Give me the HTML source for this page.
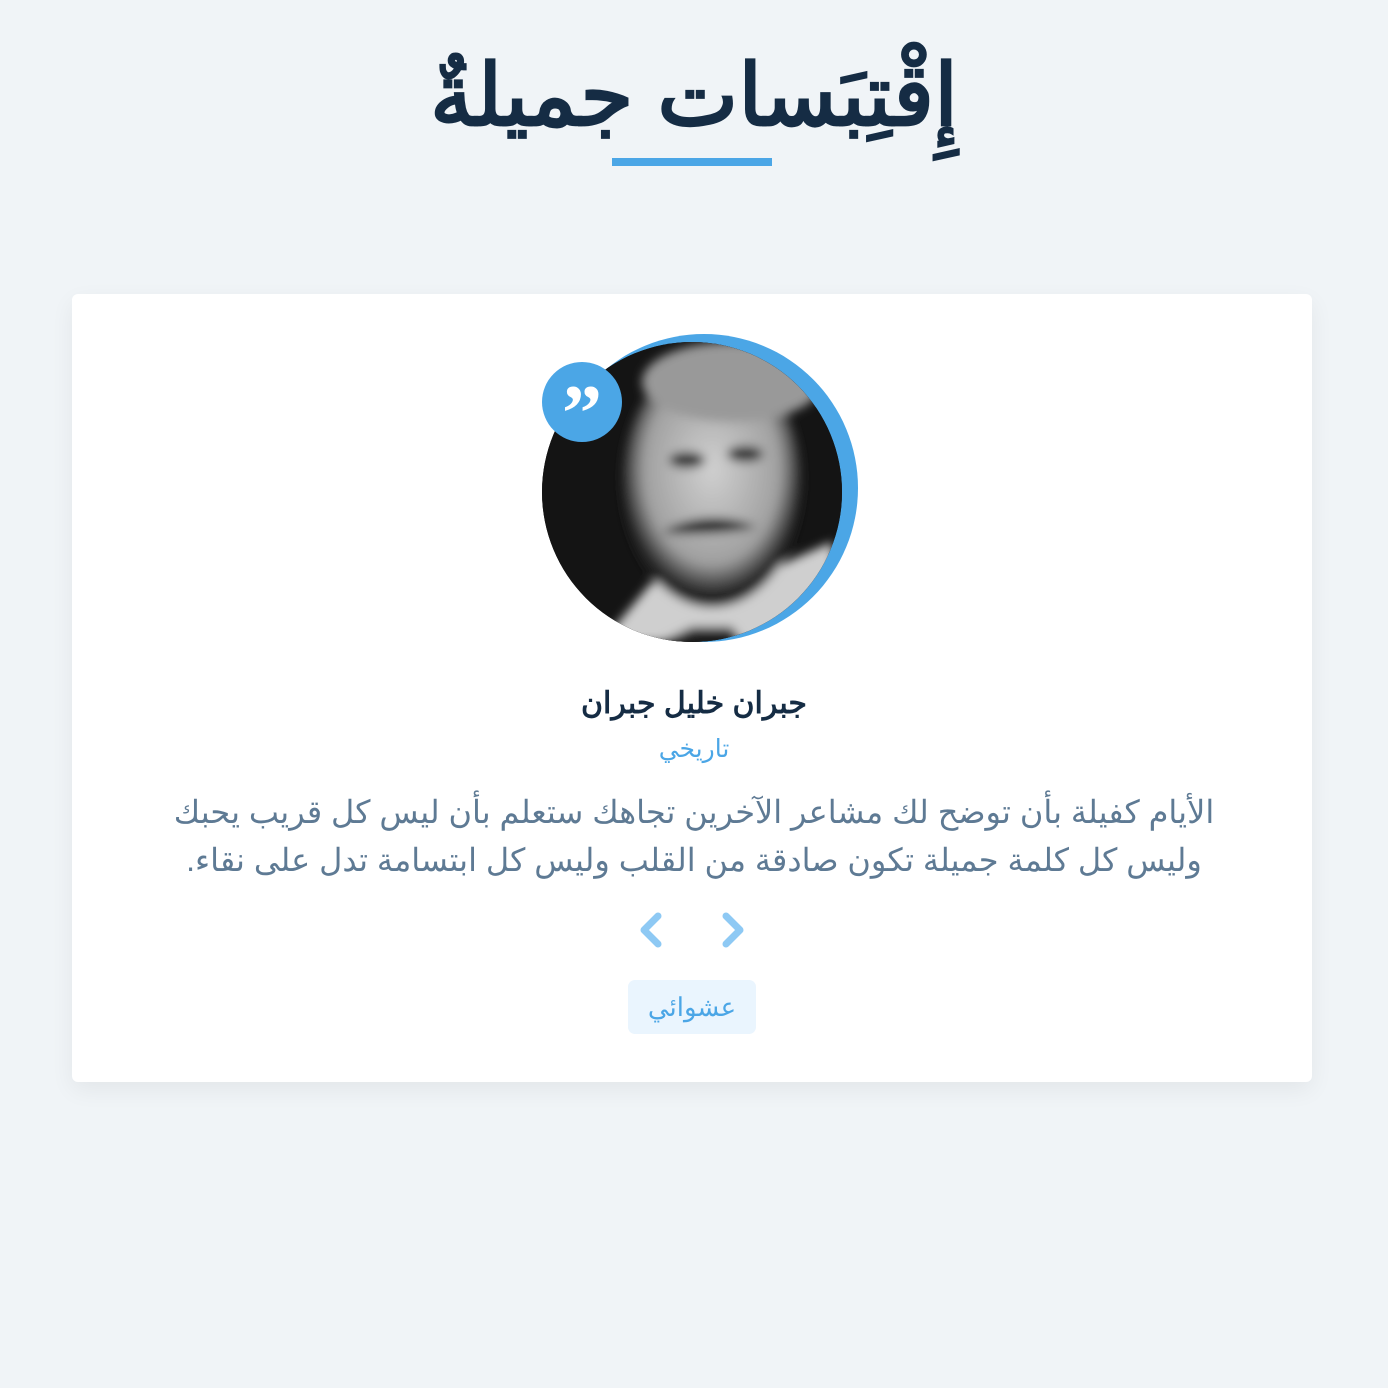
<!DOCTYPE html>
<html><head><meta charset="utf-8"><style>
body{margin:0;width:1388px;height:1388px;background:#f0f4f7;font-family:"Liberation Sans","Noto Sans CJK SC",sans-serif;position:relative;overflow:hidden}
h1{position:absolute;top:36px;left:0;width:100%;text-align:center;margin:0;font-size:86px;color:#152c44;font-weight:bold;line-height:120px}
.bar{position:absolute;left:612px;top:158px;width:160px;height:8px;background:#4ba6e6}
.card{position:absolute;left:72px;top:294px;width:1240px;height:788px;background:#fff;border-radius:6px;box-shadow:0 8px 24px rgba(0,0,0,.06)}
.ring{position:absolute;left:550px;top:334px;width:308px;height:308px;border-radius:50%;background:#4ba6e6}
.photo{position:absolute;left:542px;top:342px;width:300px;height:300px;border-radius:50%;overflow:hidden;background:#151515}
.q{position:absolute;left:542px;top:362px;width:80px;height:80px;border-radius:50%;background:#4ba6e6;color:#fff;font-size:80px;font-weight:bold;text-align:center;line-height:104px;font-family:"Liberation Serif",serif}
.t{position:absolute;left:0;width:100%;text-align:center;direction:rtl}
</style></head><body>
<h1 dir="rtl">إِقْتِبَسات جميلةٌ</h1>
<div class="bar"></div>
<div class="card"></div>
<div class="ring"></div>
<div class="photo"><svg width="300" height="300">
<defs><radialGradient id="f" cx=".5" cy=".45" r=".5"><stop offset="0" stop-color="#d0d0d0"/><stop offset=".75" stop-color="#a0a0a0"/><stop offset="1" stop-color="#222"/></radialGradient>
<filter id="b"><feGaussianBlur stdDeviation="5"/></filter></defs>
<rect width="300" height="300" fill="#141414"/>
<g filter="url(#b)">
<path d="M60 300 L110 240 L200 240 L290 200 L300 300Z" fill="#cfcfcf"/>
<ellipse cx="170" cy="140" rx="90" ry="125" fill="url(#f)"/>
<ellipse cx="190" cy="40" rx="90" ry="40" fill="#999"/>
<ellipse cx="145" cy="118" rx="18" ry="8" fill="#333"/><ellipse cx="203" cy="112" rx="18" ry="8" fill="#333"/>
<path d="M120 190 Q165 165 215 185 Q170 195 120 190Z" fill="#222"/>
<path d="M120 300 L150 285 L190 285 L200 300Z" fill="#222"/>
</g>
</svg></div>
<div class="q">”</div>
<div class="t" style="top:686px;font-size:30px;font-weight:bold;color:#152c44">جبران خليل جبران</div>
<div class="t" style="top:734px;font-size:25px;color:#4ba6e6">تاريخي</div>
<div class="t" style="top:788px;font-size:32px;line-height:48px;color:#5e7a94;padding:0 170px;box-sizing:border-box">الأيام كفيلة بأن توضح لك مشاعر الآخرين تجاهك ستعلم بأن ليس كل قريب يحبك وليس كل كلمة جميلة تكون صادقة من القلب وليس كل ابتسامة تدل على نقاء.</div>
<svg style="position:absolute;left:636px;top:910px" width="120" height="40"><path d="M22 6 L8 20 L22 34 M90 6 L104 20 L90 34" stroke="#8ec9f4" stroke-width="7" stroke-linecap="round" stroke-linejoin="round" fill="none"/></svg>
<div style="position:absolute;left:628px;top:980px;width:128px;height:54px;background:#eaf5fe;border-radius:7px;color:#4ba6e6;font-size:26px;text-align:center;line-height:54px" dir="rtl">عشوائي</div>
</body></html>
